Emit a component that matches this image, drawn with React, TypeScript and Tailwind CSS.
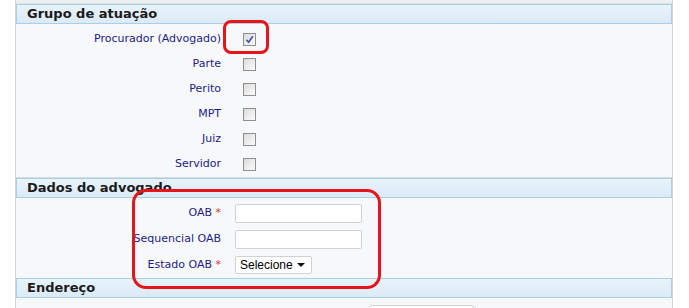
import React from "react";

type CheckRow = { label: string; checked?: boolean };

const grupo: CheckRow[] = [
  { label: "Procurador (Advogado)", checked: true },
  { label: "Parte" },
  { label: "Perito" },
  { label: "MPT" },
  { label: "Juiz" },
  { label: "Servidor" },
];

const Checkbox = ({ checked }: { checked?: boolean }) => (
  <span className="ml-[3px] flex h-[13px] w-[13px] items-center justify-center border border-[#8e8f8f] bg-gradient-to-br from-[#dcdcdc] to-[#fbfbfb]">
    {checked && (
      <svg width="9" height="9" viewBox="0 0 9 9">
        <path d="M1.5 4.8 L3.6 7.2 L7.8 1.2" fill="none" stroke="#3d4fa8" strokeWidth="1.6" />
      </svg>
    )}
  </span>
);

const SectionHeader = ({ title }: { title: string }) => (
  <div className="flex h-[20px] items-center border border-[#a9cfea] bg-gradient-to-b from-[#e8f3fb] to-[#dceaf6] pl-[10px] text-[13px] font-bold text-[#1b1b1b]">
    {title}
  </div>
);

const Label = ({ text, required }: { text: string; required?: boolean }) => (
  <div className="w-[205px] text-right">
    {text}
    {required && <span className="text-[#e0322b]"> *</span>}
  </div>
);

export default function App() {
  return (
    <div className="relative h-[308px] w-[689px] overflow-hidden bg-white font-['DejaVu_Sans',sans-serif] text-[11px] text-[#1c1c8a]">
      <div className="ml-[15px] w-[658px] border-x border-[#d5d5d5] bg-[#f7f8fa]">
        <div className="h-[4px] border-b border-[#dfe2e5] bg-[#eef1f4]" />

        <SectionHeader title="Grupo de atuação" />
        <div className="border-b border-[#d8dadd] pt-[3px]">
          {grupo.map((row) => (
            <div key={row.label} className="flex h-[25px] items-center gap-[19px]">
              <Label text={row.label} />
              <Checkbox checked={row.checked} />
            </div>
          ))}
        </div>

        <SectionHeader title="Dados do advogado" />
        <div className="pt-[2px]">
          <div className="flex h-[26px] items-center gap-[14px]">
            <Label text="OAB" required />
            <div className="h-[19px] w-[127px] rounded-[2px] border border-[#cfd3d7] bg-white" />
          </div>
          <div className="flex h-[26px] items-center gap-[14px]">
            <Label text="Sequencial OAB" />
            <div className="h-[19px] w-[127px] rounded-[2px] border border-[#cfd3d7] bg-white" />
          </div>
          <div className="flex h-[26px] items-center gap-[14px]">
            <Label text="Estado OAB" required />
            <div className="flex h-[18px] w-[77px] items-center justify-between rounded-[2px] border border-[#cfd3d7] bg-white pl-[4px] pr-[6px] font-['Liberation_Sans',sans-serif] text-[12px] text-black">
              <span>Selecione</span>
              <svg width="8" height="4" viewBox="0 0 8 4">
                <path d="M0 0 H8 L4 4 Z" fill="#111" />
              </svg>
            </div>
          </div>
        </div>

        <SectionHeader title="Endereço" />
        <div className="h-[20px] pt-[7px]">
          <div className="ml-[353px] h-[19px] w-[105px] rounded-[2px] border border-[#cfd3d7] bg-white" />
        </div>
      </div>

      <div className="absolute left-[223px] top-[20px] h-[34px] w-[46px] rounded-[8px] border-[3px] border-[#e8141c]" />
      <div className="absolute left-[132px] top-[189px] h-[100px] w-[249px] rounded-[14px] border-[3px] border-[#e8141c]" />
    </div>
  );
}
